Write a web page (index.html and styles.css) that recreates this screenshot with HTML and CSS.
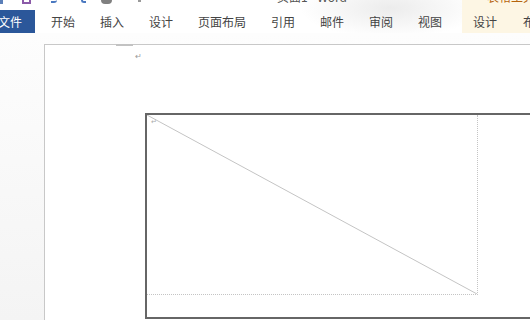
FILE: index.html
```html
<!DOCTYPE html>
<html lang="zh">
<head>
<meta charset="utf-8">
<link rel="stylesheet" href="styles.css">
</head>
<body>
<div class="screen">
  <header class="ribbon">
    <div class="main">
      <div class="titlebar">
        <div class="qat">
          <span class="q q-doc"></span>
          <span class="q q-save"></span>
          <span class="q q-undo"></span>
          <span class="q q-redo"></span>
          <span class="q q-touch"></span>
          <span class="q q-more"></span>
        </div>
        <div class="title">页面1 - Word</div>
      </div>
      <nav class="tabs">
        <div class="file">文件</div>
        <div class="tab">开始</div>
        <div class="tab">插入</div>
        <div class="tab">设计</div>
        <div class="tab">页面布局</div>
        <div class="tab">引用</div>
        <div class="tab">邮件</div>
        <div class="tab">审阅</div>
        <div class="tab">视图</div>
      </nav>
    </div>
    <div class="context">
      <div class="ctx-title"><span class="ctx-label">表格工具</span></div>
      <nav class="tabs ctx-tabs">
        <div class="tab">设计</div>
        <div class="tab">布局</div>
      </nav>
    </div>
  </header>
  <main class="docarea">
    <div class="page">
      <div class="indent-mark"></div>
      <div class="para-mark">↵</div>
      <div class="table">
        <div class="cell">
          <svg class="diag" viewBox="0 0 100 100" preserveAspectRatio="none">
            <line x1="0" y1="0" x2="100" y2="100" stroke="#c4c4c4" stroke-width="1" vector-effect="non-scaling-stroke"/>
          </svg>
          <span class="cell-mark">↵</span>
        </div>
      </div>
    </div>
  </main>
</div>
</body>
</html>
```

FILE: styles.css
```css
* { box-sizing: border-box; }
html, body { margin: 0; padding: 0; }
body {
  width: 530px;
  height: 320px;
  overflow: hidden;
  font-family: "Noto Sans CJK SC", "Liberation Sans", sans-serif;
  background: #fff;
}
.screen {
  width: 530px;
  height: 320px;
  display: flex;
  flex-direction: column;
  overflow: hidden;
}
.ribbon {
  display: flex;
  height: 33px;
  flex: none;
  background:
    radial-gradient(ellipse 90px 30px at 390px 8px, rgba(200,200,200,0.35), rgba(255,255,255,0) 100%),
    #ffffff;
}
.main {
  width: 462px;
  flex: none;
  display: flex;
  flex-direction: column;
}
.titlebar {
  height: 10px;
  display: flex;
  overflow: hidden;
}
.qat {
  display: flex;
  align-items: flex-start;
  height: 10px;
}
.q { display: block; height: 4px; }
.q-doc { width: 3px; background: #5b7fb8; }
.q-save { width: 9px; height: 4px; border: 2px solid #8b5aa8; border-top: 0; margin-left: 19px; }
.q-undo { width: 6px; height: 3px; border-bottom: 2px solid #4a78c0; border-radius: 0 0 6px 0; margin-left: 20px; }
.q-redo { width: 5px; height: 3px; border-bottom: 2px solid #4a78c0; border-left: 2px solid #4a78c0; border-radius: 0 0 0 4px; margin-left: 24px; }
.q-touch { width: 11px; height: 4px; background: #808080; border-radius: 0 0 6px 6px; margin-left: 15px; }
.q-more { width: 3px; height: 2px; background: #9a9a9a; margin-left: 26px; }
.title {
  margin-left: 136px;
  margin-top: -9px;
  font-size: 12px;
  line-height: 12px;
  color: #555;
  white-space: nowrap;
}
.tabs {
  display: flex;
  height: 23px;
  align-items: stretch;
}
.file {
  width: 50px;
  margin-left: -15px;
  background: #2b579a;
  color: #fff;
  font-size: 12px;
  display: flex;
  align-items: center;
  justify-content: center;
}
.tab {
  padding: 0 12.5px;
  font-size: 12px;
  color: #444;
  display: flex;
  align-items: center;
  white-space: nowrap;
}
.file + .tab { margin-left: 3.5px; }
.context {
  flex: 1;
  background: #fdf6e4;
  display: flex;
  flex-direction: column;
  overflow: hidden;
}
.ctx-title {
  height: 10px;
  overflow: hidden;
  flex: none;
}
.ctx-label {
  display: block;
  margin-top: -9px;
  padding-left: 25px;
  font-size: 12px;
  line-height: 12px;
  color: #b5640d;
  white-space: nowrap;
}
.ctx-tabs .tab { padding: 0 13px 0 0; }
.ctx-tabs .tab:first-child { padding-left: 11px; margin-right: 13px; }

.docarea {
  flex: 1;
  background: linear-gradient(#fdfdfd, #f4f4f4);
  padding: 11px 0 0 44px;
  display: flex;
  overflow: hidden;
}
.page {
  flex: 1;
  background: #fff;
  border-top: 1px solid #c8c8c8;
  border-left: 1px solid #c8c8c8;
  padding-left: 71px;
  display: flex;
  flex-direction: column;
  min-width: 600px;
}
.indent-mark {
  width: 17px;
  height: 2px;
  margin-top: -1px;
  background: #c2c2c2;
  flex: none;
}
.para-mark {
  margin-left: 19px;
  margin-top: 6px;
  font-size: 8px;
  line-height: 8px;
  height: 8px;
  color: #9a9a9a;
  flex: none;
}
.table {
  margin-left: 29px;
  margin-top: 53px;
  height: 206px;
  border-top: 2px solid #666;
  border-left: 2px solid #666;
  border-bottom: 2px solid #666;
  flex: none;
}
.cell {
  position: relative;
  width: 331px;
  height: 180px;
  border-right: 1px dotted #c4c4c4;
  border-bottom: 1px dotted #c4c4c4;
}
.diag {
  position: absolute;
  left: 0;
  top: 0;
  width: 100%;
  height: 100%;
}
.cell-mark {
  position: absolute;
  left: 4px;
  top: 3px;
  font-size: 7px;
  line-height: 7px;
  color: #aaa;
}
```
